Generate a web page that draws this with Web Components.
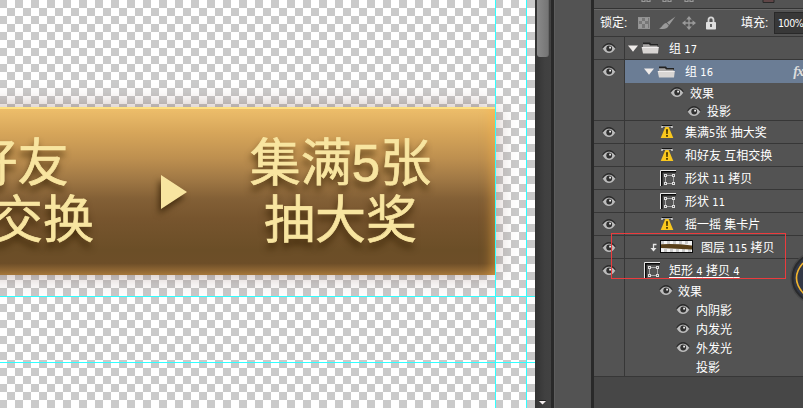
<!DOCTYPE html>
<html lang="zh-CN">
<head>
<meta charset="utf-8">
<title>图层</title>
<style>
html,body{margin:0;height:408px;overflow:hidden;background:#535353}
</style>
</head>
<body>
<photo-editor></photo-editor>
<script>
const define = (name, html) => customElements.define(name, class extends HTMLElement {
  connectedCallback() {
    if (this.shadowRoot) return;
    const t = document.createElement('template');
    t.innerHTML = typeof html === 'function' ? html(this) : html;
    this.attachShadow({mode: 'open'}).append(t.content.cloneNode(true));
  }
});

const icons = {
  eye: [14, 11, '<path d="M.8 5Q3.500.8 7 .8T13.200 5" fill="none" stroke="#2b2b2b" stroke-width="1.400"/><path d="M.8 5.800Q3.300 1.700 7 1.700t6.200 4.100Q10.700 10 7 10T.8 5.800Z" fill="#bcbcbc"/><circle cx="7.200" cy="5.500" r="2.900" fill="#303030"/><rect x="7.200" y="3.700" width="1.800" height="1.800" fill="#f0f0f0"/>'],
  folder: [19, 14, '<path d="M2 3V1.500h7l1 1.500h7v2H2z" fill="#222"/><path d="M2 3.200h6l1 1.300h7.500V12H2z" fill="#a9a7a6"/><path d="M0.600 6H17.800L17 12.500H2z" fill="#d8d5d3"/><path d="M1 6.500h16.500" stroke="#f0eded"/>'],
  warn: [14, 14, '<path d="M2 3V1h10v2" fill="none" stroke="#eee" stroke-width="1.200"/><path d="M1.500.500h11" stroke="#161616"/><path d="M5.300 2h3.400L13.300 13H.7z" fill="#fac81d"/><path d="M6 4.300h2L7.700 9H6.300zM6.100 10h1.800v1.800H6.100z" fill="#463600"/>'],
  shape: [16, 16, '<path d="M1.500 16V1.500H16" fill="none" stroke="#080808" stroke-width="2"/><path d="M.5 16V.5H16" fill="none" stroke="#e8e8e8"/><rect x="5.500" y="5.500" width="8" height="8" fill="#555" stroke="#aaa"/><g fill="#555" stroke="#dedede"><rect x="4.500" y="4.500" width="2" height="2"/><rect x="12.500" y="4.500" width="2" height="2"/><rect x="4.500" y="12.500" width="2" height="2"/><rect x="12.500" y="12.500" width="2" height="2"/></g>'],
  tri: [10, 7, '<path d="M0 0.500h10L5 6.800z" fill="#efebe9"/>'],
  clip: [7, 9, '<path d="M6.500 1.500H3.500V6" fill="none" stroke="#e6e6e6" stroke-width="1.300"/><path d="M.5 5h6l-3 3.500z" fill="#e6e6e6"/>'],
  pixels: [12, 12, '<path fill="#777" d="M0 0h12v12H0z"/><path fill="#999" d="M1 1h3v3H1zM7 1h3v3H7zM4 4h3v3H4zM1 7h3v4H1zM7 7h3v4H7z"/><rect x=".5" y=".5" width="11" height="11" fill="none" stroke="#929292"/>'],
  brush: [17, 14, '<path d="M16.500 0.500L8 6.500l2.200 2.500z" fill="#9a9a9a"/><path d="M7.300 7l2.500 2.500C8 13.500 4 13.500 0 12.500 3.500 11.500 3.500 7.500 7.300 7z" fill="#9a9a9a"/>'],
  move: [14, 14, '<path d="M7 2.500v9M2.500 7h9" stroke="#9a9a9a" stroke-width="1.300"/><path d="M7 0l2.800 3.500H4.200zM7 14l2.800-3.500H4.200zM0 7l3.500-2.800v5.600zM14 7l-3.500-2.800v5.600z" fill="#9a9a9a"/>'],
  lock: [12, 14, '<path d="M3.500 6.500V4a2.500 2.700 0 0 1 5 0v2.500" fill="none" stroke="#d6d6d6" stroke-width="1.800"/><rect x="1" y="6" width="10" height="7.500" rx=".8" fill="#e0e0e0"/><path d="M5.300 8h1.400v3H5.300z" fill="#333"/>'],
  strip: [33, 14, '<rect x=".5" y=".5" width="32" height="12" fill="#f4f4f4" stroke="#080808"/><path d="M1 1h3v3H1zM7 1h3v3H7zM13 1h3v3h-3zM19 1h3v3h-3zM25 1h3v3h-3zM4 9h3v3H4zM10 9h3v3h-3zM16 9h3v3h-3zM22 9h3v3h-3zM28 9h3v3h-3z" fill="#cbcbcb"/><path d="M1 4.300Q16 3.500 32 5.500v4Q16 8.500 1 8z" fill="#583f19"/>']
};
define('ui-icon', el => {
  const [w, h, body] = icons[el.getAttribute('name')];
  return `<style>:host{display:block;flex:none;width:${w}px;height:${h}px}svg{display:block}</style><svg width="${w}" height="${h}" viewBox="0 0 ${w} ${h}">${body}</svg>`;
});

define('layer-label', `<style>
:host{display:block;white-space:pre;font:12px/18px "Liberation Sans","Noto Sans CJK SC",sans-serif;color:#fff;padding-top:2px}
</style><slot></slot>`);

/* One line in the layer list: an indented run of icons followed by a label. */
define('layer-line', el => `<style>
:host{display:flex;align-items:center;height:${el.getAttribute('h') || 22}px;padding-left:${el.getAttribute('indent')}px;box-sizing:border-box;gap:${el.getAttribute('gap') || 6}px;white-space:nowrap}
:host([selected]){background:#6b7d95}
</style><slot></slot>`);

define('layer-row', el => `<style>
:host{display:grid;grid-template-columns:31px 1fr;height:${el.getAttribute('h') || 23}px;box-sizing:border-box;border-bottom:1px solid #373737;background:#535353}
.vis{border-right:1px solid #373737;padding:6px 0 0 8px}
.body{min-width:0;overflow:hidden}
</style><div class="vis"><ui-icon name="eye"></ui-icon></div><div class="body"><slot></slot></div>`);

define('gold-text', `<style>
:host{display:block;text-align:center;white-space:nowrap;font:51px/57px "Liberation Sans","Noto Sans CJK SC",sans-serif;color:#f8e5a0;-webkit-text-stroke:.7px #f8e5a0;text-shadow:-1px 6px 7px rgba(55,34,4,.85)}
</style><slot></slot>`);

define('gold-banner', `<style>
:host{display:grid;grid-template-columns:204px 1fr 185px;box-sizing:border-box;width:605px;height:168px;margin-left:-110px;padding:26px 62px 0 0;
 border-top:2px solid #fee184;
 background:linear-gradient(#edbe6b 0,#d7a65a 14%,#bd8f4f 30%,#a17945 42%,#836036 54%,#77552e 66%,#6b4e27 85%,#6d4e28 93%,#a4763b 100%);
 box-shadow:0 0 20px rgba(100,55,45,.38), inset -12px 0 12px -9px rgba(255,180,65,.55)}
.arrow{padding:40px 0 0 67px}
svg{display:block;overflow:visible;filter:drop-shadow(-2px 5px 3px rgba(50,29,3,.75))}
</style>
<slot name="from"></slot>
<div class="arrow"><svg width="27" height="35"><path d="M0 0L26 17L0 34z" fill="#f8e5a0"/></svg></div>
<slot name="to"></slot>`);

define('art-canvas', `<style>
:host{display:block;position:relative;overflow:hidden;background:conic-gradient(#fff 25%,#cacaca 0 50%,#fff 0 75%,#cacaca 0) -1px 0/16px 16px;padding-top:107px;box-sizing:border-box;height:408px}
i{position:absolute;background:#31ffff}
.v{width:1px;height:100%;top:0}.h{height:1px;width:100%;left:0}
</style><slot></slot><i class="v" style="left:495px"></i><i class="v" style="left:526px"></i><i class="h" style="top:296px"></i><i class="h" style="top:362px"></i>`);

define('scroll-bar', `<style>
:host{display:flex;flex-direction:column;justify-content:space-between;align-items:center;background:linear-gradient(90deg,#333,#404040 60%,#424242);height:408px}
.thumb{width:12px;height:57px;border-radius:0 0 3px 3px;background:linear-gradient(90deg,#8a8a8a,#757575);border-right:1px solid #666;box-sizing:border-box}
svg{display:block;margin:0 0 3px -1px}
</style><div class="thumb"></div><svg width="7" height="5"><path d="M0 1h7L3.500 4.500z" fill="#f4eeee"/><path d="M0 .5h7" stroke="#222"/></svg>`);

define('lock-bar', `<style>
:host{display:grid;grid-template-columns:38px 22px 22px 23px 36px 33px 1fr;align-items:center;height:28px;box-sizing:border-box;border-top:1px solid #686868;border-bottom:1px solid #373737;padding-left:6px;background:#535353;overflow:hidden}
.field{height:22px;box-sizing:border-box;border:1px solid #292929;border-right:0;background:#383838;padding-left:3px;overflow:hidden}
.field layer-label{font-size:10.500px;font-family:"DejaVu Sans Condensed",sans-serif;letter-spacing:-.4px}
layer-label{margin-top:-2px}
.field layer-label{margin-top:0;padding-top:1px}
</style>
<layer-label>锁定:</layer-label><ui-icon name="pixels"></ui-icon><ui-icon name="brush" style="margin-left:-1px"></ui-icon><ui-icon name="move"></ui-icon><ui-icon name="lock"></ui-icon><layer-label>填充:</layer-label><div class="field"><layer-label>100%</layer-label></div>`);

define('option-strip', `<style>
:host{display:block;height:9px;box-sizing:border-box;background:#535353;border-bottom:1px solid #333}
svg{display:block}
</style><svg width="209" height="8"><g fill="none" stroke="#999" stroke-width="1.200"><path d="M48 0v1.500h3V0M53 0v1.500h3V0M69 0v1.500h3V0M74 0v1.500h3V0M91 0v1.500h3V0M96 0v1.500h3V0"/></g><path d="M169 0v2.500h11V0" fill="#604647" stroke="#292929"/></svg>`);

define('status-orb', `<style>:host{position:absolute;left:790px;top:250px}svg{display:block}</style>
<svg width="13" height="56"><circle cx="27" cy="28" r="27" fill="#484848"/><circle cx="27" cy="28" r="24.500" fill="#333845" stroke="#292a2d" stroke-width="2"/><path d="M13 13Q-1 29 15 45" fill="none" stroke="#f2b42d" stroke-width="1.600"/></svg>`);

define('region-outline', `<style>:host{position:absolute;left:611px;top:233px;width:175px;height:46px;box-sizing:border-box;border:1px solid #ec3b3d}</style>`);

define('layers-panel', `<style>
:host{display:block;background:#474747;height:408px;overflow:hidden}
.fx{color:#ddd;font:italic bold 14px/18px "Liberation Serif",serif;letter-spacing:-1px;margin-left:auto;margin-right:0}
.n{font-family:"DejaVu Sans Condensed",sans-serif;font-size:11px}
u{text-decoration-thickness:1px;text-underline-offset:2px}
</style>
<option-strip></option-strip><lock-bar></lock-bar>
<layer-row><layer-line indent="3" gap="3"><ui-icon name="tri"></ui-icon><ui-icon name="folder"></ui-icon><layer-label style="margin-left:6px">组 <span class="n">17</span></layer-label></layer-line></layer-row>
<layer-row h="61"><layer-line selected h="23" indent="19" gap="3"><ui-icon name="tri"></ui-icon><ui-icon name="folder"></ui-icon><layer-label style="margin-left:6px">组 <span class="n">16</span></layer-label><span class="fx">fx</span></layer-line>
<layer-line h="19" indent="45"><ui-icon name="eye"></ui-icon><layer-label>效果</layer-label></layer-line>
<layer-line h="18" indent="62"><ui-icon name="eye"></ui-icon><layer-label>投影</layer-label></layer-line></layer-row>
<layer-row><layer-line indent="35"><ui-icon name="warn"></ui-icon><layer-label style="margin-left:5px">集满<span class="n">5</span>张 抽大奖</layer-label></layer-line></layer-row>
<layer-row><layer-line indent="35"><ui-icon name="warn"></ui-icon><layer-label style="margin-left:5px">和好友 互相交换</layer-label></layer-line></layer-row>
<layer-row><layer-line indent="35"><ui-icon name="shape"></ui-icon><layer-label style="margin-left:3px">形状 <span class="n">11</span> 拷贝</layer-label></layer-line></layer-row>
<layer-row><layer-line indent="35"><ui-icon name="shape"></ui-icon><layer-label style="margin-left:3px">形状 <span class="n">11</span></layer-label></layer-line></layer-row>
<layer-row><layer-line indent="35"><ui-icon name="warn"></ui-icon><layer-label style="margin-left:5px">摇一摇 集卡片</layer-label></layer-line></layer-row>
<layer-row><layer-line indent="25" gap="3"><ui-icon name="clip"></ui-icon><ui-icon name="strip"></ui-icon><layer-label style="margin-left:5px">图层 <span class="n">115</span> 拷贝</layer-label></layer-line></layer-row>
<layer-row h="118"><layer-line indent="19" h="22"><ui-icon name="shape"></ui-icon><layer-label style="margin-left:3px"><u>矩形 <span class="n">4</span> 拷贝 <span class="n">4</span></u></layer-label></layer-line>
<layer-line h="19" indent="34" gap="5"><ui-icon name="eye"></ui-icon><layer-label>效果</layer-label></layer-line>
<layer-line h="19" indent="51"><ui-icon name="eye"></ui-icon><layer-label>内阴影</layer-label></layer-line>
<layer-line h="19" indent="51"><ui-icon name="eye"></ui-icon><layer-label>内发光</layer-label></layer-line>
<layer-line h="19" indent="51"><ui-icon name="eye"></ui-icon><layer-label>外发光</layer-label></layer-line>
<layer-line h="19" indent="71"><layer-label>投影</layer-label></layer-line></layer-row>`);

define('photo-editor', `<style>
:host{display:grid;grid-template-columns:535px 16px 43px 209px;width:803px;height:408px;position:relative;overflow:hidden}
.dock{background:#535353;border-left:3px solid #292929;border-right:3px solid #292929;box-shadow:inset 1px 0 #5d5d5d}
</style>
<art-canvas><gold-banner><gold-text slot="from">和好友<br>互相交换</gold-text><gold-text slot="to">集满5张<br>抽大奖</gold-text></gold-banner></art-canvas>
<scroll-bar></scroll-bar><div class="dock"></div><layers-panel></layers-panel>
<region-outline></region-outline><status-orb></status-orb>`);
</script>
</body>
</html>
